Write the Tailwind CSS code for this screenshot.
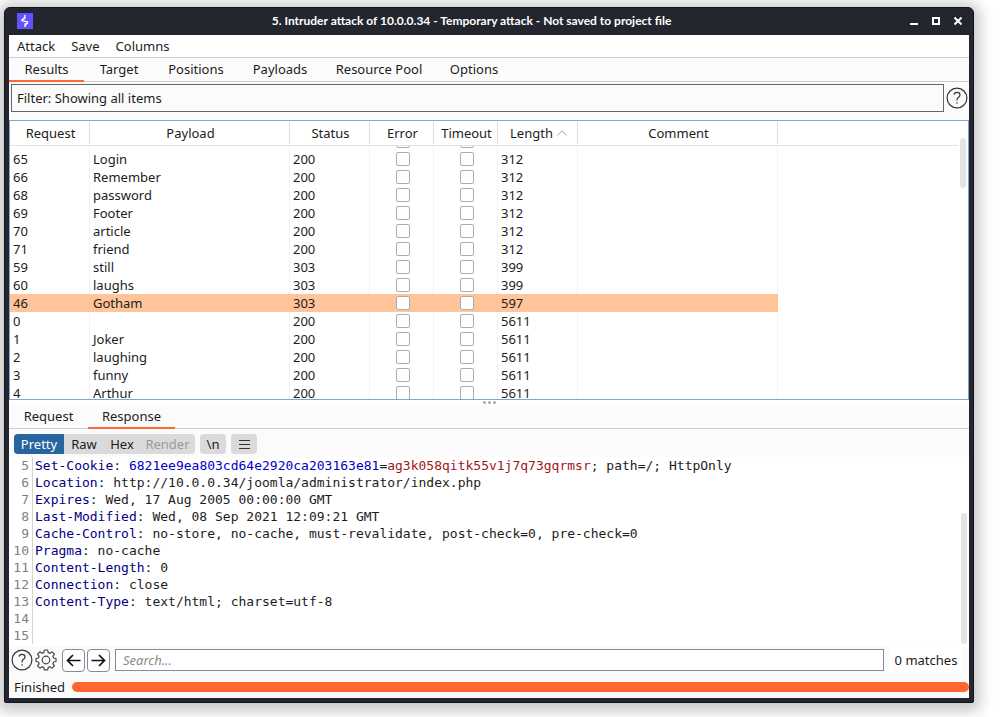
<!DOCTYPE html>
<html lang="en">
<head>
  <meta charset="UTF-8" />
  <meta name="viewport" content="width=device-width, initial-scale=1.0"/>
  <title>5. Intruder attack of 10.0.0.34</title>

  <!-- Tailwind CSS -->
  <script src="https://cdn.jsdelivr.net/npm/@tailwindcss/browser@4"></script>
</head>

<body class="h-screen overflow-hidden bg-white pt-[7px] pl-1 pr-[29px] pb-[14px] font-['Noto_Sans',sans-serif] text-[13px] leading-[18px] text-[#1c1c1c]">
<!-- Window -->
<div class="h-full flex flex-col bg-[#23262f] border border-[#12141a] rounded-t-md rounded-b-xs px-1 pb-1 shadow-[0_2px_14px_6px_rgba(0,0,0,0.22)]">

  <!-- Title bar -->
  <header class="h-[27px] shrink-0 flex items-center justify-between pl-2 pr-[7px] pb-px">
    <svg class="w-4 h-4" viewBox="0 0 16 16" aria-hidden="true">
      <rect width="16" height="16" fill="#6152ff"/>
      <path d="M7.800 2v3.500L5 6.500v1.300l5.500 1v1.400L8 11v3M8.300 3.500 5.500 7M10.500 9.500 8 12.800" fill="none" stroke="#fff" stroke-width="1.300"/>
    </svg>
    <h1 class="font-['Lato',sans-serif] text-xs font-bold text-white">5. Intruder attack of 10.0.0.34 - Temporary attack - Not saved to project file</h1>
    <div class="flex items-center gap-[14px] text-white">
      <button class="w-2 h-2" aria-label="Minimize">
        <svg class="block w-2 h-2" viewBox="0 0 8 8"><path d="M0 7h8" stroke="currentColor" stroke-width="2"/></svg>
      </button>
      <button class="w-2 h-2" aria-label="Maximize">
        <svg class="block w-2 h-2" viewBox="0 0 8 8"><rect x="1" y="1" width="6" height="6" fill="none" stroke="currentColor" stroke-width="2"/></svg>
      </button>
      <button class="w-2 h-2" aria-label="Close">
        <svg class="block w-2 h-2" viewBox="0 0 8 8"><path d="M.5.5l7 7M7.500.5l-7 7" stroke="currentColor" stroke-width="2"/></svg>
      </button>
    </div>
  </header>

  <div class="flex-1 min-h-0 flex flex-col bg-[#fbfbfb]">
    <!-- Menu -->
    <nav class="h-[23px] shrink-0 flex items-center gap-4 px-2 bg-white border-b border-[#cdcdcd]">
      <button>Attack</button>
      <button>Save</button>
      <button>Columns</button>
    </nav>

    <!-- Main tabs -->
    <nav class="h-6 shrink-0 flex border-b border-[#cdcdcd] *:-mb-px *:border-b-2">
      <button class="w-[75px] border-[#ff6633]">Results</button>
      <button class="w-[70px] border-transparent">Target</button>
      <button class="w-[84px] border-transparent">Positions</button>
      <button class="w-[84px] border-transparent">Payloads</button>
      <button class="w-[114px] border-transparent">Resource Pool</button>
      <button class="w-[76px] border-transparent">Options</button>
    </nav>

    <!-- Filter -->
    <div class="shrink-0 flex items-center gap-[2px] pt-[2px] pb-2 pl-[2px] pr-px">
      <button class="flex-1 h-7 px-[5px] text-left border border-[#666]">Filter: Showing all items</button>
      <button class="w-[22px] h-[22px]" aria-label="Help">
        <svg class="block w-[22px] h-[22px]" viewBox="0 0 22 22" fill="none" stroke="#333" stroke-width="1.2">
          <circle cx="11" cy="11" r="9.900"/>
          <path d="M8 7.600C8.300 6.200 9.500 5.400 11 5.400c1.800 0 3 1 3 2.500 0 2.300-3 2.500-3 5v.6"/>
          <circle cx="11" cy="16" r=".8" fill="#333" stroke="none"/>
        </svg>
      </button>
    </div>

    <!-- Attack results -->
    <section class="relative h-[280px] shrink-0 bg-white border border-[#7ba7d7]">
      <div class="h-full mr-[10px] overflow-hidden">
        <table class="w-full table-fixed border-separate border-spacing-0">
          <colgroup>
            <col class="w-20"><col class="w-[200px]"><col class="w-20"><col class="w-16"><col class="w-16"><col class="w-20"><col class="w-[200px]"><col>
          </colgroup>
          <thead>
            <tr class="*:h-[25px] *:p-0 *:font-normal *:border-b *:border-[#e2e2e2]">
              <th><div class="h-[22px] leading-[22px] pl-[2px] border-r border-[#dcdcdc]">Request</div></th>
              <th><div class="h-[22px] leading-[22px] pl-[2px] border-r border-[#dcdcdc]">Payload</div></th>
              <th><div class="h-[22px] leading-[22px] pl-[2px] border-r border-[#dcdcdc]">Status</div></th>
              <th><div class="h-[22px] leading-[22px] pl-[2px] border-r border-[#dcdcdc]">Error</div></th>
              <th><div class="h-[22px] leading-[22px] pl-[2px] border-r border-[#dcdcdc]">Timeout</div></th>
              <th>
                <div class="h-[22px] leading-[22px] pl-[2px] flex items-center justify-center gap-1 border-r border-[#dcdcdc]">
                  Length
                  <svg class="w-[10px] h-[6px]" viewBox="0 0 10 6"><path d="M.5 5.500 5 .8l4.500 4.700" fill="none" stroke="#a5a5a5"/></svg>
                </div>
              </th>
              <th><div class="h-[22px] leading-[22px] pl-[2px] border-r border-[#dcdcdc]">Comment</div></th>
              <th></th>
            </tr>
          </thead>
          <tbody id="rows"></tbody>
        </table>
      </div>
      <div class="absolute right-[2px] top-[17px] w-[6px] h-[50px] rounded-full bg-[#e4e4e4]"></div>
    </section>

    <!-- Splitter -->
    <div class="h-[5px] shrink-0 flex items-center justify-center gap-[2px] bg-white">
      <span class="w-[3px] h-[3px] rounded-full bg-[#a8a8a8]"></span>
      <span class="w-[3px] h-[3px] rounded-full bg-[#a8a8a8]"></span>
      <span class="w-[3px] h-[3px] rounded-full bg-[#a8a8a8]"></span>
    </div>

    <!-- Message tabs -->
    <nav class="h-6 shrink-0 flex border-b border-[#c8d0d0] *:-mb-px *:border-b-2">
      <button class="w-[79px] border-transparent">Request</button>
      <button class="w-[87px] border-[#ff6633]">Response</button>
    </nav>

    <!-- Viewer toolbar -->
    <div class="h-7 pt-[2px] shrink-0 flex items-center gap-[5px] px-[5px]">
      <div class="flex h-5 rounded bg-[#dadada] overflow-hidden">
        <button class="w-[50px] bg-[#2765a0] text-white">Pretty</button>
        <button class="w-10">Raw</button>
        <button class="w-9">Hex</button>
        <button class="w-[55px] text-[#9a9a9a]" disabled>Render</button>
      </div>
      <button class="w-[26px] h-5 rounded bg-[#dadada]">\n</button>
      <button class="w-[26px] h-5 rounded bg-[#dadada] flex items-center justify-center" aria-label="Menu">
        <svg class="w-[11px] h-[9px]" viewBox="0 0 11 9"><path d="M0 .5h11M0 4.500h11M0 8.500h11" stroke="#333"/></svg>
      </button>
    </div>

    <!-- Response viewer -->
    <section class="relative flex-1 min-h-0 overflow-hidden bg-white font-['DejaVu_Sans_Mono',monospace] leading-[17px]">
      <div id="response" class="whitespace-pre"></div>
      <div class="absolute right-[2px] bottom-[2px] w-[6px] h-[131px] rounded-full bg-[#e4e4e4]"></div>
    </section>

    <!-- Search bar -->
    <div class="h-7 shrink-0 flex items-center pl-[2px] pr-[6px]">
      <button class="w-[22px] h-[22px]" aria-label="Search help">
        <svg class="block w-[22px] h-[22px]" viewBox="0 0 22 22" fill="none" stroke="#333" stroke-width="1.2">
          <circle cx="11" cy="11" r="9.900"/>
          <path d="M8 7.600C8.300 6.200 9.500 5.400 11 5.400c1.800 0 3 1 3 2.500 0 2.300-3 2.500-3 5v.6"/>
          <circle cx="11" cy="16" r=".8" fill="#333" stroke="none"/>
        </svg>
      </button>
      <button class="ml-[2px] w-[22px] h-[22px]" aria-label="Search settings">
        <svg class="block w-[22px] h-[22px]" viewBox="0 0 22 22" fill="none" stroke="#444" stroke-width="1.2" stroke-linejoin="round">
          <path d="M9.300 1h3.400l.5 2.600 1.700.7L17.100 2.800l2.300 2.300-1.500 2.200.7 1.700 2.400.5v3l-2.400.5-.7 1.700 1.500 2.200-2.300 2.300-2.200-1.500-1.700.7-.5 2.500H9.300l-.5-2.500-1.700-.7-2.200 1.500-2.300-2.300 1.500-2.200-.7-1.700L1 12.500v-3l2.400-.5.7-1.700-1.500-2.200 2.300-2.300 2.200 1.500 1.700-.7z"/>
          <circle cx="11" cy="11" r="3.800"/>
        </svg>
      </button>
      <button class="ml-[5px] w-[23px] h-[23px] flex items-center justify-center rounded border border-[#8c879c] bg-white" aria-label="Previous match">
        <svg class="w-[15px] h-[13px]" viewBox="0 0 15 13"><path d="M14.500 6.500H1.500M7 1 1.500 6.500 7 12" fill="none" stroke="#111" stroke-width="1.700"/></svg>
      </button>
      <button class="ml-[2px] w-[23px] h-[23px] flex items-center justify-center rounded border border-[#8c879c] bg-white" aria-label="Next match">
        <svg class="w-[15px] h-[13px]" viewBox="0 0 15 13"><path d="M.5 6.500h13M8 1l5.500 5.500L8 12" fill="none" stroke="#111" stroke-width="1.700"/></svg>
      </button>
      <input type="text" placeholder="Search..." aria-label="Search" class="ml-[5px] flex-1 min-w-0 h-[22px] px-[7px] border border-[#8c879c] bg-white placeholder:italic placeholder:text-[#8a8a8a] focus:outline-none"/>
      <span class="ml-[5px] w-[74px] h-[26px] leading-[26px] text-center bg-white">0 matches</span>
    </div>

    <!-- Status -->
    <footer class="h-6 pt-[2px] shrink-0 flex items-center pl-[5px]">
      <span class="w-[58px]">Finished</span>
      <div class="flex-1 h-[10px] rounded-full bg-[#ff6633]"></div>
    </footer>
  </div>
</div>

<script>
  // request, payload, status, length
  const results = [
    ['65', 'Login', 200, 312],
    ['66', 'Remember', 200, 312],
    ['68', 'password', 200, 312],
    ['69', 'Footer', 200, 312],
    ['70', 'article', 200, 312],
    ['71', 'friend', 200, 312],
    ['59', 'still', 303, 399],
    ['60', 'laughs', 303, 399],
    ['46', 'Gotham', 303, 597],
    ['0', '', 200, 5611],
    ['1', 'Joker', 200, 5611],
    ['2', 'laughing', 200, 5611],
    ['3', 'funny', 200, 5611],
    ['4', 'Arthur', 200, 5611],
  ];
  const selected = '46';

  const box = (label) => `<input type="checkbox" aria-label="${label}" class="block shrink-0 mx-auto appearance-none w-[14px] h-[14px] rounded-xs border border-[#adadad] bg-white"/>`;

  // tail of the row that is scrolled under the header
  const edge = 'p-0 border-r border-[#f2f2f2]';
  const tail = (label) => `<td class="pl-[3px] ${edge}"><div class="h-1 pb-[2px] overflow-hidden flex items-end">${box(label)}</div></td>`;
  const first = `<tr>
    <td class="${edge}"></td><td class="${edge}"></td><td class="${edge}"></td>
    ${tail('Error')}${tail('Timeout')}
    <td class="${edge}"></td><td class="${edge}"></td><td></td>
  </tr>`;

  document.getElementById('rows').innerHTML = first + results.map(([id, payload, status, length]) => {
    const td = id === selected
      ? 'h-[18px] p-0 pl-[3px] border-r border-[#ffc499] bg-[#ffc499]'
      : 'h-[18px] p-0 pl-[3px] border-r border-[#f2f2f2]';
    return `<tr>
      <td class="${td}">${id}</td>
      <td class="${td}">${payload}</td>
      <td class="${td}">${status}</td>
      <td class="${td}">${box('Error')}</td>
      <td class="${td}">${box('Timeout')}</td>
      <td class="${td}">${length}</td>
      <td class="${td}"></td>
      <td></td>
    </tr>`;
  }).join('');

  const h = (name, value) => `<span class="text-[#00007f]">${name}</span>: ${value}`;
  const lines = [
    h('Set-Cookie', '<span class="text-[#0000c8]">6821ee9ea803cd64e2920ca203163e81</span>=<span class="text-[#a31515]">ag3k058qitk55v1j7q73gqrmsr</span>; path=/; HttpOnly'),
    h('Location', 'http://10.0.0.34/joomla/administrator/index.php'),
    h('Expires', 'Wed, 17 Aug 2005 00:00:00 GMT'),
    h('Last-Modified', 'Wed, 08 Sep 2021 12:09:21 GMT'),
    h('Cache-Control', 'no-store, no-cache, must-revalidate, post-check=0, pre-check=0'),
    h('Pragma', 'no-cache'),
    h('Content-Length', '0'),
    h('Connection', 'close'),
    h('Content-Type', 'text/html; charset=utf-8'),
    '',
    '',
  ];
  document.getElementById('response').innerHTML = lines.map((line, i) =>
    `<div class="flex h-[17px]"><span class="w-6 pr-[3px] shrink-0 text-right text-[#808080] border-r border-[#d4d4d4]">${i + 5}</span><span class="pl-[2px]">${line}</span></div>`
  ).join('');
</script>
</body>
</html>
